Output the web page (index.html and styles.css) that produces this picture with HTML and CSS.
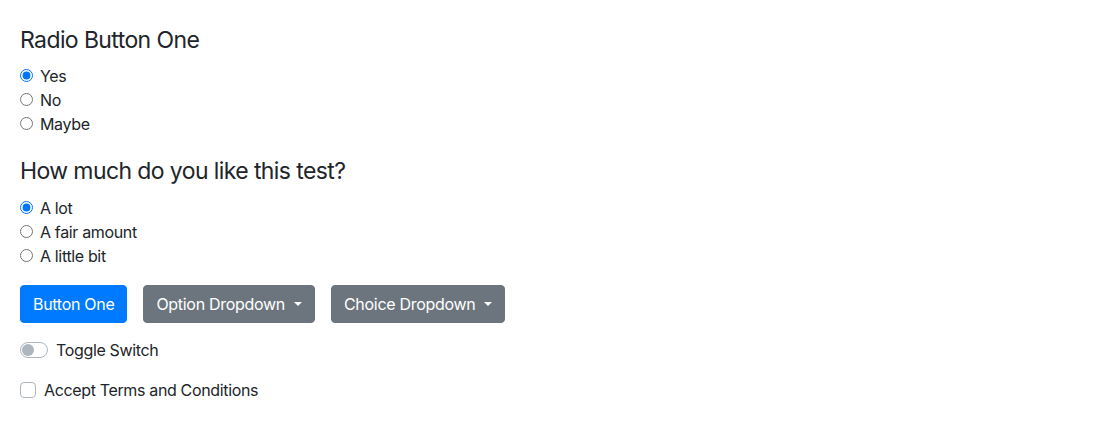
FILE: index.html
```html
<!DOCTYPE html>
<html lang="en">
<head>
<meta charset="utf-8">
<title>Form test</title>
<link rel="stylesheet" href="styles.css">
</head>
<body>
<main class="page">
  <section class="group">
    <h4 class="title">Radio Button One</h4>
    <div class="form-check"><input class="radio" type="radio" name="one" id="r1" checked><label for="r1">Yes</label></div>
    <div class="form-check"><input class="radio" type="radio" name="one" id="r2"><label for="r2">No</label></div>
    <div class="form-check"><input class="radio" type="radio" name="one" id="r3"><label for="r3">Maybe</label></div>
  </section>
  <section class="group">
    <h4 class="title">How much do you like this test?</h4>
    <div class="form-check"><input class="radio" type="radio" name="two" id="t1" checked><label for="t1">A lot</label></div>
    <div class="form-check"><input class="radio" type="radio" name="two" id="t2"><label for="t2">A fair amount</label></div>
    <div class="form-check"><input class="radio" type="radio" name="two" id="t3"><label for="t3">A little bit</label></div>
  </section>
  <div class="buttons">
    <button class="btn btn-primary" type="button">Button One</button>
    <button class="btn btn-secondary dropdown-toggle" type="button">Option Dropdown</button>
    <button class="btn btn-secondary dropdown-toggle" type="button">Choice Dropdown</button>
  </div>
  <div class="custom-control switch">
    <span class="switch-track"><span class="switch-knob"></span></span>
    <span class="control-label">Toggle Switch</span>
  </div>
  <div class="custom-control checkbox">
    <span class="check-box"></span>
    <span class="control-label">Accept Terms and Conditions</span>
  </div>
</main>
</body>
</html>
```
FILE: styles.css
```css
* { box-sizing: border-box; }
html, body { margin: 0; padding: 0; background: #fff; }
body {
  font-family: Inter, "Liberation Sans", sans-serif;
  font-size: 16px;
  line-height: 1.5;
  letter-spacing: -0.35px;
  color: #212529;
}
.page {
  padding: 26px 20px 20px 20px;
  display: flex;
  flex-direction: column;
  align-items: flex-start;
}
.group { margin-bottom: 21px; }
.group + .group { margin-bottom: 17px; }
.title {
  margin: 0 0 9px 0;
  font-size: 23px;
  font-weight: 400;
  line-height: 29px;
  letter-spacing: -0.6px;
}
.group + .group .title { margin-bottom: 10px; }
.form-check {
  position: relative;
  padding-left: 20px;
  height: 24px;
}
.radio {
  position: absolute;
  left: 0;
  top: 5px;
  margin: 0;
  width: 13px;
  height: 13px;
}
.buttons {
  display: flex;
  gap: 16px;
  margin-bottom: 15px;
}
.btn {
  font-family: inherit;
  font-size: 16px;
  line-height: 24px;
  letter-spacing: -0.3px;
  padding: 6px 12px;
  border: 1px solid transparent;
  border-radius: 4px;
  color: #fff;
  cursor: pointer;
}
.btn-primary { background: #007bff; border-color: #007bff; }
.btn-secondary { background: #6c757d; border-color: #6c757d; }
.dropdown-toggle::after {
  content: "";
  display: inline-block;
  margin-left: 9px;
  vertical-align: 0.255em;
  border-top: 0.3em solid;
  border-right: 0.3em solid transparent;
  border-left: 0.3em solid transparent;
  border-bottom: 0;
}
.custom-control {
  position: relative;
  min-height: 24px;
  display: flex;
  align-items: center;
}
.switch { padding-left: 36px; margin-bottom: 16px; }
.checkbox { padding-left: 24px; }
.switch-track {
  position: absolute;
  left: 0;
  top: 4px;
  width: 28px;
  height: 16px;
  border: 1px solid #adb5bd;
  border-radius: 8px;
  background: #fff;
}
.switch-knob {
  position: absolute;
  left: 1px;
  top: 1px;
  width: 12px;
  height: 12px;
  border-radius: 6px;
  background: #adb5bd;
}
.check-box {
  position: absolute;
  left: 0;
  top: 4px;
  width: 16px;
  height: 16px;
  border: 1px solid #adb5bd;
  border-radius: 4px;
  background: #fff;
}
```
